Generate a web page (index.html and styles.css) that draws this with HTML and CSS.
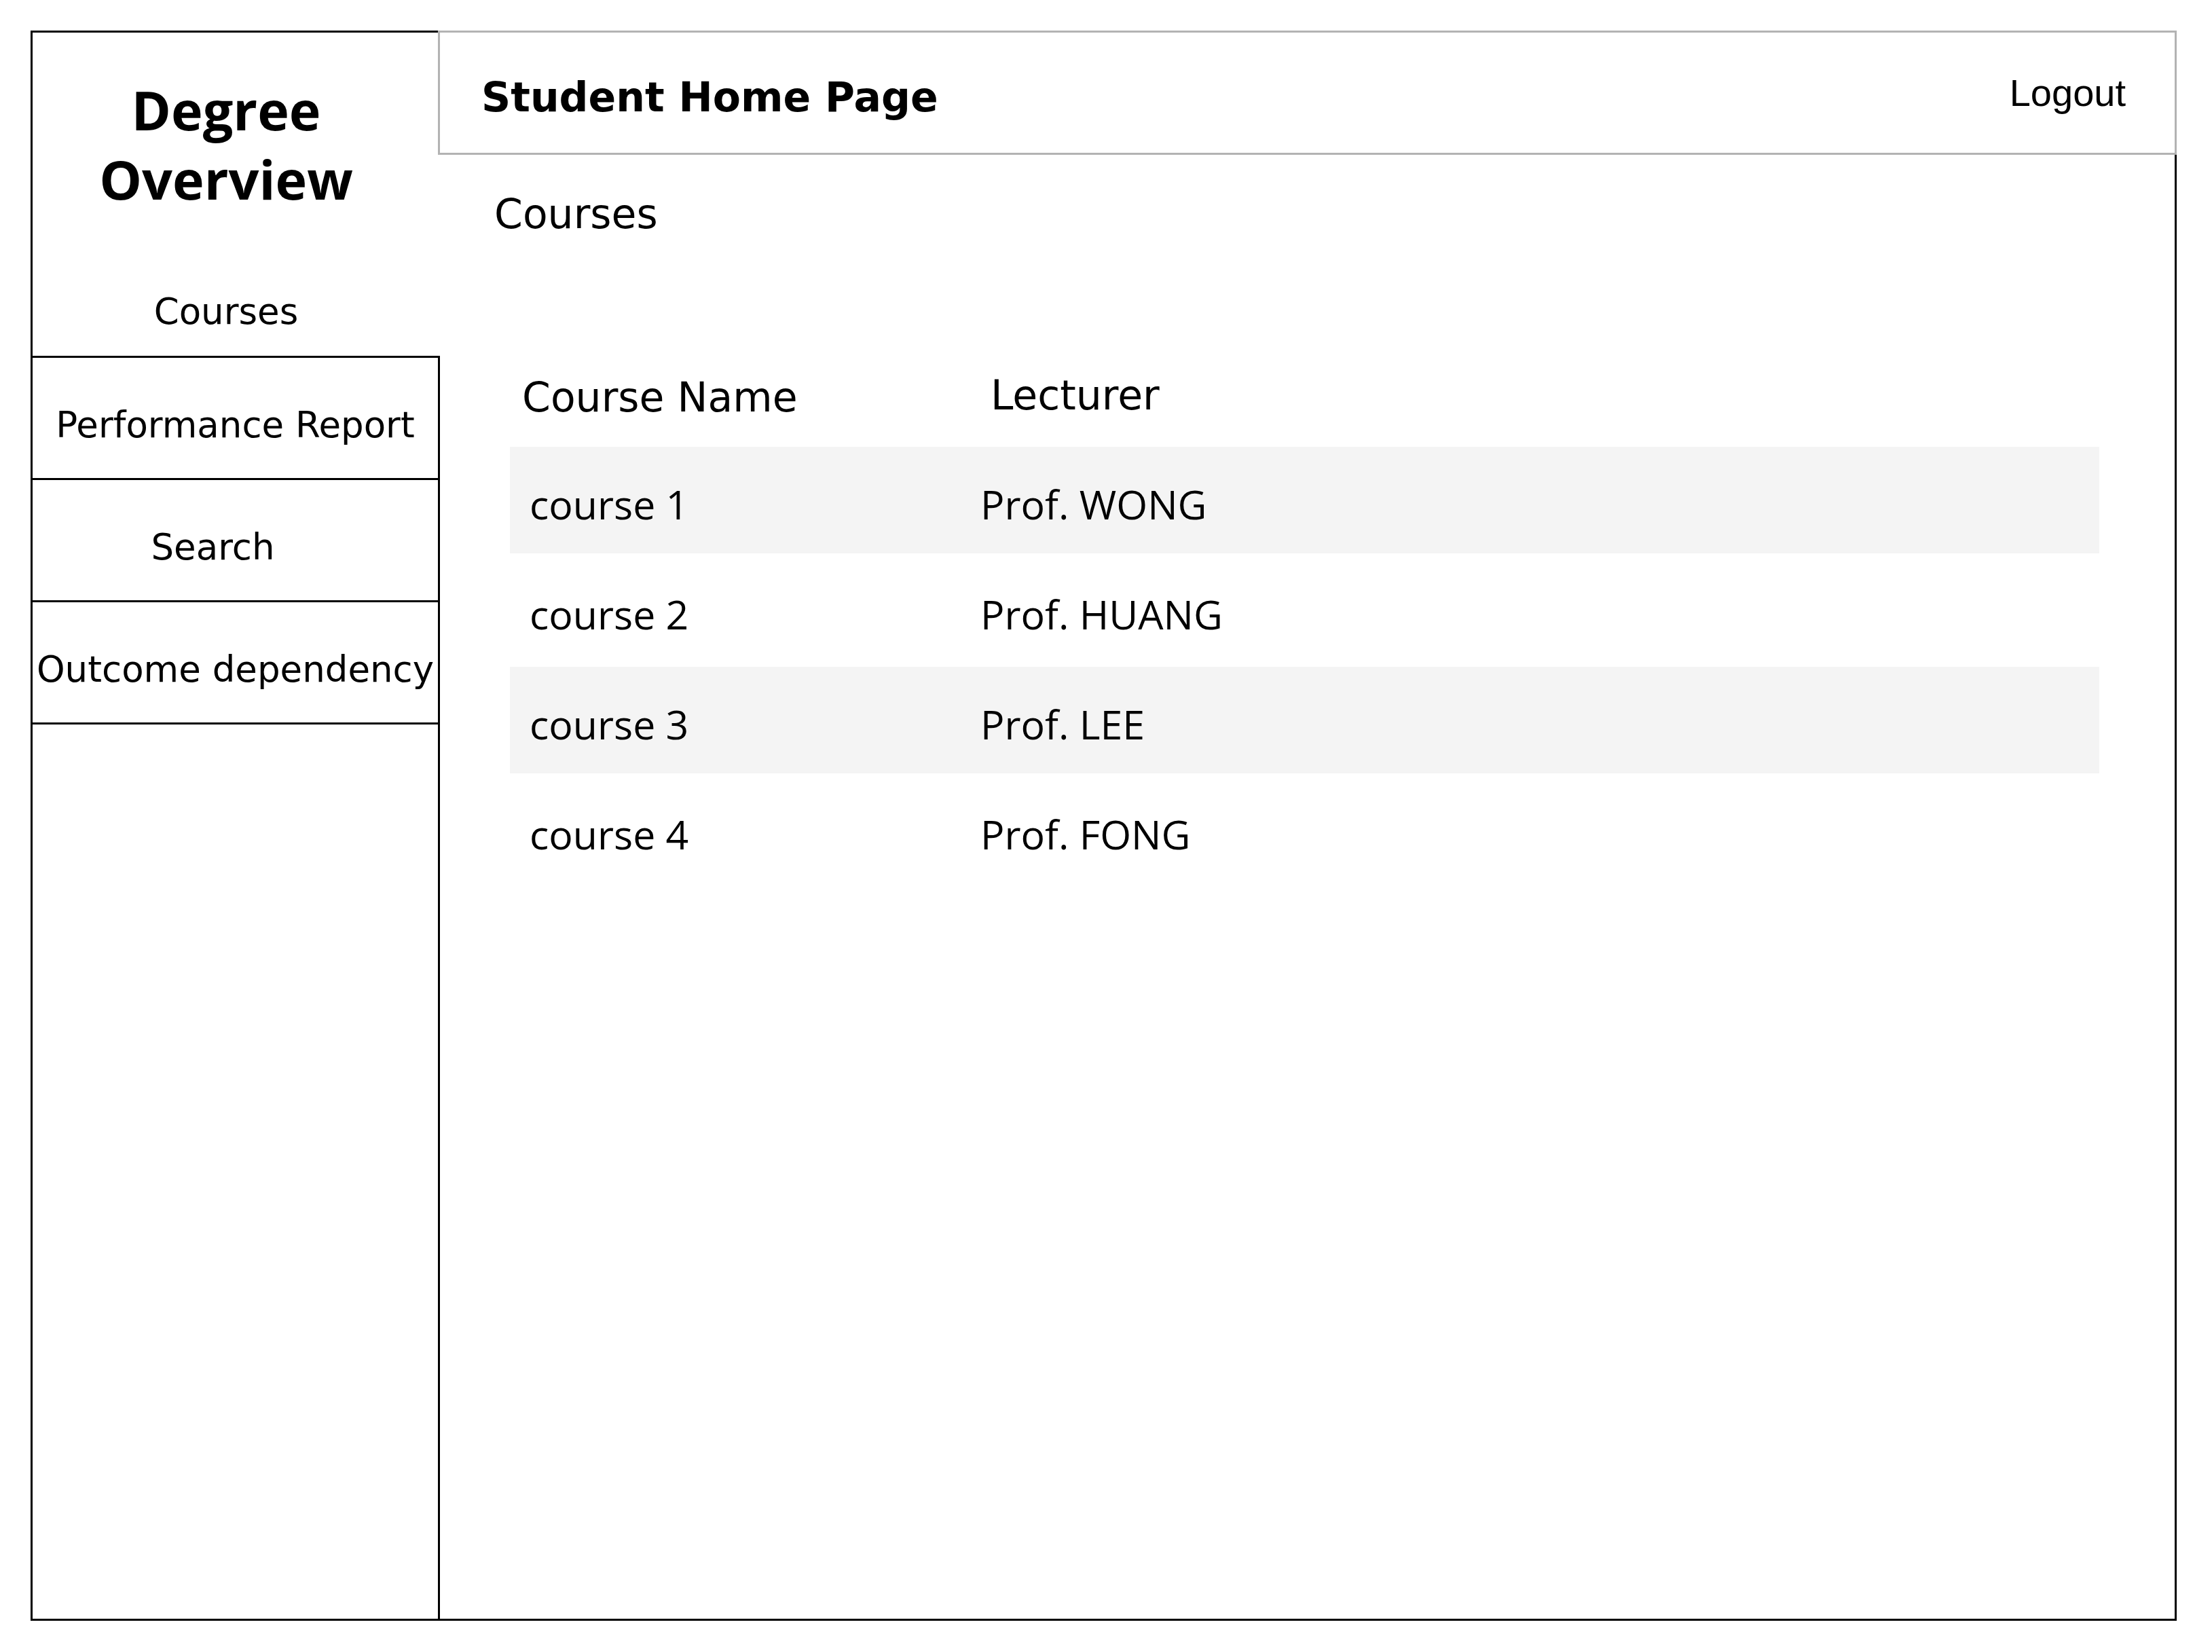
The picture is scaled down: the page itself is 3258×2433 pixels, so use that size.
FILE: index.html
```html
<!DOCTYPE html>
<html lang="en">
<head>
<meta charset="utf-8">
<title>Student Home Page</title>
<link rel="stylesheet" href="styles.css">
</head>
<body>
<div class="frame">
  <aside class="sidebar">
    <div class="brand">
      <h1 class="brand-title">Degree<br>Overview</h1>
      <a class="brand-link">Courses</a>
    </div>
    <nav class="nav">
      <a class="nav-item">Performance Report</a>
      <a class="nav-item nav-item--search">Search</a>
      <a class="nav-item">Outcome dependency</a>
    </nav>
  </aside>
  <div class="main">
    <header class="topbar">
      <h2 class="topbar-title">Student Home Page</h2>
      <a class="logout">Logout</a>
    </header>
    <section class="content">
      <h3 class="section-title">Courses</h3>
      <div class="table">
        <div class="thead">
          <div class="th th--name">Course Name</div>
          <div class="th th--lect">Lecturer</div>
        </div>
        <div class="tbody">
          <div class="tr"><div class="td td--name">course 1</div><div class="td">Prof. WONG</div></div>
          <div class="tr"><div class="td td--name">course 2</div><div class="td">Prof. HUANG</div></div>
          <div class="tr"><div class="td td--name">course 3</div><div class="td">Prof. LEE</div></div>
          <div class="tr"><div class="td td--name">course 4</div><div class="td">Prof. FONG</div></div>
        </div>
      </div>
    </section>
  </div>
</div>
</body>
</html>
```

FILE: styles.css
```css
* {
  box-sizing: border-box;
}

html, body {
  margin: 0;
  padding: 0;
  background: #ffffff;
  color: #000000;
}

body {
  font-family: "DejaVu Sans", Verdana, sans-serif;
}

.frame {
  margin: 45px 0 0 45px;
  width: 3161px;
  height: 2342px;
  display: flex;
}

/* ---------- sidebar ---------- */
.sidebar {
  width: 603px;
  flex: none;
  display: flex;
  flex-direction: column;
  border-left: 3px solid #000;
  border-top: 3px solid #000;
  border-bottom: 3px solid #000;
}

.brand {
  height: 476px;
  flex: none;
  padding: 63px 30px 0 0;
  text-align: center;
}

.brand-title {
  margin: 0;
  font-family: "Comic Sans MS", "Open Sans", sans-serif;
  font-weight: 700;
  font-size: 79px;
  line-height: 102px;
}

.brand-link {
  display: block;
  margin-top: 113px;
  font-size: 53px;
}

.nav {
  flex: 1;
  display: flex;
  flex-direction: column;
  border-top: 3px solid #000;
  border-right: 3px solid #000;
}

.nav-item {
  height: 180px;
  flex: none;
  display: flex;
  align-items: center;
  justify-content: center;
  padding-top: 20px;
  border-bottom: 3px solid #000;
  font-size: 53px;
  white-space: nowrap;
}

.nav-item--search {
  padding-right: 66px;
}

/* ---------- main ---------- */
.main {
  flex: 1;
  margin-left: -3px;
  display: flex;
  flex-direction: column;
  min-width: 0;
}

.topbar {
  height: 183px;
  flex: none;
  display: flex;
  align-items: center;
  justify-content: space-between;
  padding: 0 72px 0 61px;
  border: 3px solid #b3b3b3;
  background: #ffffff;
}

.topbar-title {
  margin: 0;
  padding-top: 13px;
  font-size: 60px;
  font-weight: 700;
}

.logout {
  font-family: "Liberation Sans", Arial, sans-serif;
  font-size: 56px;
}

.content {
  flex: 1;
  padding: 52px 111px 0 83px;
  border-right: 3px solid #000;
  border-bottom: 3px solid #000;
}

.section-title {
  margin: 0;
  font-size: 60px;
  font-weight: 400;
}

.table {
  margin: 200px 0 0 23px;
}

.thead {
  display: grid;
  grid-template-columns: 693px 1fr;
  padding-bottom: 38px;
  font-size: 60px;
}

.th--name {
  padding-left: 18px;
}

.th--lect {
  padding-left: 15px;
  transform: translateY(-3px);
}

.tbody {
  display: flex;
  flex-direction: column;
  gap: 5px;
}

.tr {
  height: 157px;
  display: grid;
  grid-template-columns: 693px 1fr;
  align-items: center;
  padding-top: 11px;
  font-family: "Comic Sans MS", "Open Sans", sans-serif;
  font-size: 59px;
}

.tr:nth-child(odd) {
  background: #f4f4f4;
}

.td--name {
  padding-left: 29px;
}
```
